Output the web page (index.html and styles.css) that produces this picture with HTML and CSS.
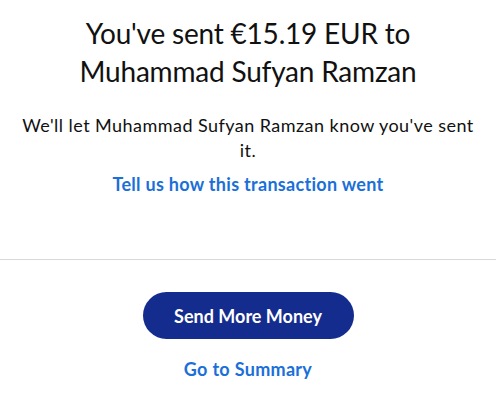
FILE: index.html
```html
<!DOCTYPE html>
<html>
<head>
<meta charset="utf-8">
<link rel="stylesheet" href="styles.css">
</head>
<body>
<main class="page">
  <section class="top">
    <h1 class="title">You've sent €15.19 EUR to Muhammad Sufyan Ramzan</h1>
    <p class="note">We'll let Muhammad Sufyan Ramzan know you've sent it.</p>
    <a class="link feedback" href="#">Tell us how this transaction went</a>
  </section>
  <hr class="divider">
  <section class="actions">
    <button class="primary">Send More Money</button>
    <a class="link summary" href="#">Go to Summary</a>
  </section>
</main>
</body>
</html>
```

FILE: styles.css
```css
* { box-sizing: border-box; }
html, body { margin: 0; padding: 0; background: #fff; }
body {
  font-family: Lato, "Open Sans", sans-serif;
  color: #111;
}
.page {
  width: 496px;
  display: flex;
  flex-direction: column;
}
.top {
  display: flex;
  flex-direction: column;
  align-items: center;
  text-align: center;
  padding: 14px 20px 0;
  height: 259px;
}
.title {
  margin: 0;
  font-size: 28px;
  font-weight: 400;
  line-height: 38px;
  width: 360px;
  letter-spacing: -0.2px;
}
.note {
  margin: 23px 0 0;
  font-size: 18px;
  line-height: 25px;
  letter-spacing: 0.45px;
  width: 452px;
}
.link {
  font-weight: 700;
  color: #1a6fd8;
  text-decoration: none;
  font-size: 18px;
  letter-spacing: 0.3px;
}
.feedback {
  margin-top: 9px;
  line-height: 24px;
}
.divider {
  margin: 0;
  border: 0;
  border-top: 1px solid #d9d9d9;
  width: 100%;
}
.actions {
  display: flex;
  flex-direction: column;
  align-items: center;
  padding-top: 32px;
}
.primary {
  font-family: inherit;
  width: 211px;
  height: 47px;
  border: 0;
  border-radius: 24px;
  background: #142c8e;
  color: #fff;
  font-size: 18px;
  font-weight: 700;
}
.summary {
  margin-top: 18px;
  line-height: 24px;
}
```
